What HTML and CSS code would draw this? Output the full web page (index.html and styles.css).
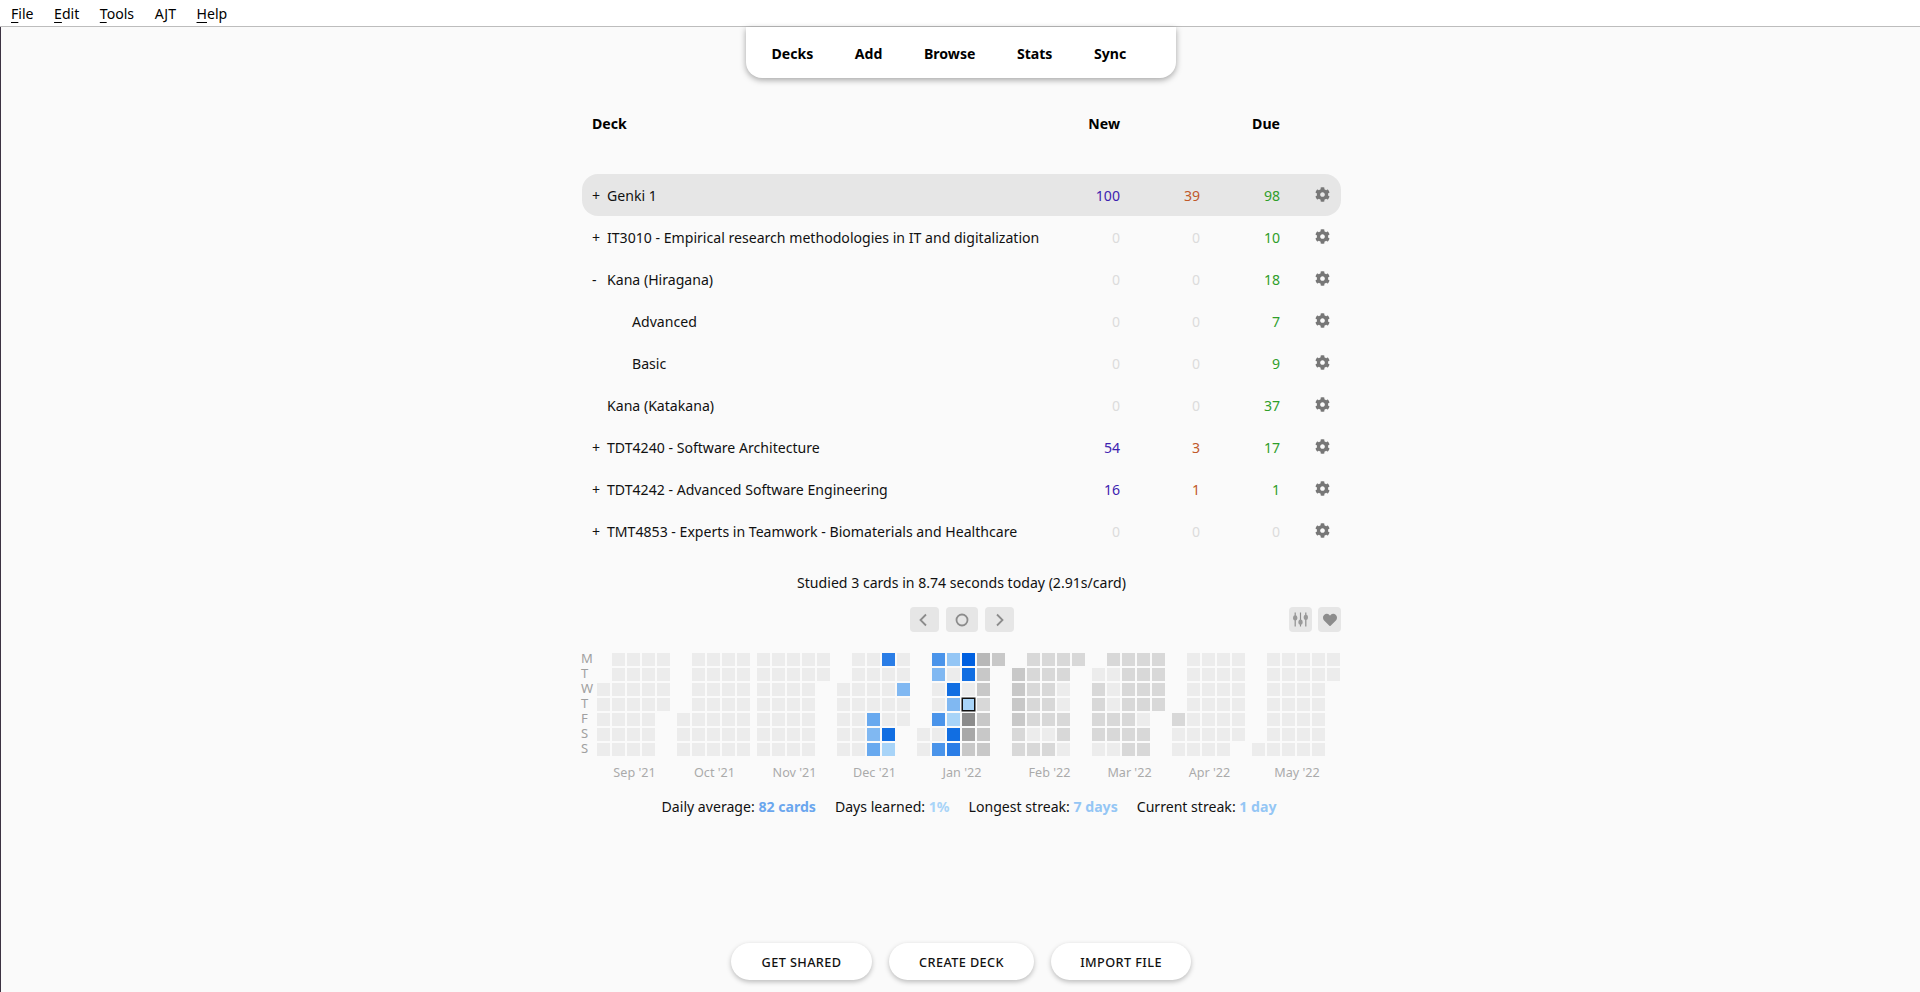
FILE: index.html
```html
<!DOCTYPE html>
<html lang="en">
<head>
  <meta charset="UTF-8" />
  <title>Anki</title>
  <link rel="stylesheet" href="styles.css">
</head>
<body>
  <svg class="sprites" aria-hidden="true">
    <symbol id="gear" viewBox="0 0 512 512">
      <path d="M487.4 315.7l-42.6-24.6c4.3-23.2 4.3-47 0-70.2l42.6-24.6c4.9-2.8 7.1-8.6 5.5-14-11.1-35.6-30-67.8-54.7-94.6-3.8-4.1-10-5.1-14.8-2.3L380.8 110c-17.9-15.4-38.5-27.3-60.8-35.1V25.8c0-5.6-3.9-10.5-9.4-11.7-36.7-8.2-74.3-7.8-109.2 0-5.5 1.2-9.4 6.1-9.4 11.7V75c-22.2 7.9-42.8 19.8-60.8 35.1L88.7 85.5c-4.9-2.8-11-1.9-14.8 2.3-24.7 26.7-43.6 58.9-54.7 94.6-1.7 5.4.6 11.2 5.5 14L67.3 221c-4.3 23.2-4.3 47 0 70.2l-42.6 24.6c-4.9 2.8-7.1 8.6-5.5 14 11.1 35.6 30 67.8 54.7 94.6 3.8 4.1 10 5.1 14.8 2.3l42.6-24.6c17.9 15.4 38.5 27.3 60.8 35.1v49.2c0 5.6 3.9 10.5 9.4 11.7 36.7 8.2 74.3 7.8 109.2 0 5.5-1.2 9.4-6.1 9.4-11.7v-49.2c22.2-7.9 42.8-19.8 60.8-35.1l42.6 24.6c4.9 2.8 11 1.9 14.8-2.3 24.7-26.7 43.6-58.9 54.7-94.6 1.5-5.5-.7-11.3-5.6-14.1zM256 336c-44.1 0-80-35.9-80-80s35.9-80 80-80 80 35.9 80 80-35.9 80-80 80z"/>
    </symbol>
  </svg>

  <div class="menubar">
    <span><u>F</u>ile</span>
    <span><u>E</u>dit</span>
    <span><u>T</u>ools</span>
    <span>AJT</span>
    <span><u>H</u>elp</span>
  </div>

  <div class="main">
    <nav class="toolbar">
      <a>Decks</a>
      <a>Add</a>
      <a>Browse</a>
      <a>Stats</a>
      <a>Sync</a>
    </nav>

    <div class="decks">
      <div class="deck-row deck-head">
        <span class="deck-title">Deck</span>
        <span class="num">New</span>
        <span></span>
        <span class="num">Due</span>
        <span></span>
      </div>

      <div class="deck-list">
        <div class="deck-row is-current">
          <span class="deck-name"><i class="toggle">+</i>Genki 1</span>
          <span class="num new">100</span><span class="num learn">39</span><span class="num due">98</span>
          <svg class="gear"><use href="#gear"/></svg>
        </div>
        <div class="deck-row">
          <span class="deck-name"><i class="toggle">+</i>IT3010 - Empirical research methodologies in IT and digitalization</span>
          <span class="num zero">0</span><span class="num zero">0</span><span class="num due">10</span>
          <svg class="gear"><use href="#gear"/></svg>
        </div>
        <div class="deck-row">
          <span class="deck-name"><i class="toggle">-</i>Kana (Hiragana)</span>
          <span class="num zero">0</span><span class="num zero">0</span><span class="num due">18</span>
          <svg class="gear"><use href="#gear"/></svg>
        </div>
        <div class="deck-row">
          <span class="deck-name sub">Advanced</span>
          <span class="num zero">0</span><span class="num zero">0</span><span class="num due">7</span>
          <svg class="gear"><use href="#gear"/></svg>
        </div>
        <div class="deck-row">
          <span class="deck-name sub">Basic</span>
          <span class="num zero">0</span><span class="num zero">0</span><span class="num due">9</span>
          <svg class="gear"><use href="#gear"/></svg>
        </div>
        <div class="deck-row">
          <span class="deck-name"><i class="toggle"></i>Kana (Katakana)</span>
          <span class="num zero">0</span><span class="num zero">0</span><span class="num due">37</span>
          <svg class="gear"><use href="#gear"/></svg>
        </div>
        <div class="deck-row">
          <span class="deck-name"><i class="toggle">+</i>TDT4240 - Software Architecture</span>
          <span class="num new">54</span><span class="num learn">3</span><span class="num due">17</span>
          <svg class="gear"><use href="#gear"/></svg>
        </div>
        <div class="deck-row">
          <span class="deck-name"><i class="toggle">+</i>TDT4242 - Advanced Software Engineering</span>
          <span class="num new">16</span><span class="num learn">1</span><span class="num due">1</span>
          <svg class="gear"><use href="#gear"/></svg>
        </div>
        <div class="deck-row">
          <span class="deck-name"><i class="toggle">+</i>TMT4853 - Experts in Teamwork - Biomaterials and Healthcare</span>
          <span class="num zero">0</span><span class="num zero">0</span><span class="num zero">0</span>
          <svg class="gear"><use href="#gear"/></svg>
        </div>
      </div>
    </div>

    <p class="studied">Studied 3 cards in 8.74 seconds today (2.91s/card)</p>

    <div class="heat-controls">
      <div></div>
      <div class="heat-nav">
        <button class="icon-btn nav-btn">
          <svg viewBox="0 0 16 16"><path d="M10 2.5 4.5 8l5.5 5.5"/></svg>
        </button>
        <button class="icon-btn nav-btn wide">
          <svg viewBox="0 0 16 16"><circle cx="8" cy="8" r="5.5"/></svg>
        </button>
        <button class="icon-btn nav-btn">
          <svg viewBox="0 0 16 16"><path d="M6 2.5 11.500 8 6 13.500"/></svg>
        </button>
      </div>
      <div class="heat-tools">
        <button class="icon-btn tool-btn">
          <svg viewBox="0 0 16 16">
            <path d="M3 1.500v13M8 1.500v13M13 1.500v13"/>
            <rect class="knob" x="1" y="4" width="4" height="5" rx="2"/>
            <rect class="knob" x="6" y="8" width="4" height="5" rx="2"/>
            <rect class="knob" x="11" y="3.500" width="4" height="5" rx="2"/>
          </svg>
        </button>
        <button class="icon-btn tool-btn">
          <svg class="heart" viewBox="0 0 512 512"><path d="M462.300 62.600C407.500 15.900 326 24.300 275.700 76.200L256 96.500l-19.700-20.300C186.100 24.300 104.500 15.900 49.700 62.600c-62.800 53.600-66.100 149.800-9.900 207.900l193.500 199.800c12.500 12.900 32.800 12.900 45.300 0l193.500-199.800c56.300-58.100 53-154.300-9.800-207.900z"/></svg>
        </button>
      </div>
    </div>

    <div class="heatmap" id="heatmap">
      <div class="weekdays">
        <span>M</span><span>T</span><span>W</span><span>T</span><span>F</span><span>S</span><span>S</span>
      </div>
    </div>

    <p class="summary">
      <span>Daily average: <b class="c-avg">82 cards</b></span>
      <span>Days learned: <b class="c-pct">1%</b></span>
      <span>Longest streak: <b class="c-streak">7 days</b></span>
      <span>Current streak: <b class="c-streak">1 day</b></span>
    </p>

    <div class="bottom-btns">
      <button class="pill pill-shared">Get Shared</button>
      <button class="pill pill-create">Create Deck</button>
      <button class="pill pill-import">Import File</button>
    </div>
  </div>

  <script src="heat.js"></script>
</body>
</html>
```

FILE: styles.css
```css
* {
  box-sizing: border-box;
}
body {
  margin: 0;
  height: 992px;
  display: flex;
  flex-direction: column;
  font-family: "Noto Sans", "Open Sans", sans-serif;
  font-size: 14.1px;
  color: #111;
  background-color: #fafafa;
  overflow: hidden;
}
.sprites {
  display: none;
}
.menubar {
  height: 27px;
  flex: none;
  display: flex;
  align-items: center;
  gap: 20.5px;
  padding-left: 11px;
  background: white;
  border-bottom: 1px solid #bdbdbd;
  color: #000;
}
.menubar u {
  text-underline-offset: 3px;
}
.main {
  flex: 1;
  display: flex;
  flex-direction: column;
  align-items: center;
  border-left: 1px solid #3c3242;
}
.toolbar {
  width: 430px;
  height: 51px;
  flex: none;
  display: flex;
  align-items: center;
  gap: 41.5px;
  padding: 2px 0 0 26px;
  background: white;
  border-radius: 0 0 16px 16px;
  box-shadow: 0 2px 6px rgba(0, 0, 0, 0.35);
  font-weight: 700;
  color: #000;
}
.decks {
  width: 759px;
  margin: 25px 0 0 2px;
}
.deck-row {
  height: 42px;
  display: grid;
  grid-template-columns: 1fr 80px 80px 80px 61px;
  align-items: center;
  padding-left: 10px;
  border-radius: 16px;
}
.deck-row.is-current {
  background-color: #e6e6e6;
}
.deck-head {
  padding-bottom: 2px;
  font-weight: 700;
  color: #000;
}
.deck-list {
  margin-top: 29px;
}
.num {
  text-align: right;
}
.new {
  color: #3d22b0;
}
.learn {
  color: #c0582a;
}
.due {
  color: #2f9e2a;
}
.zero {
  color: #dcdcdc;
}
.toggle {
  display: inline-block;
  width: 15px;
  font-style: normal;
}
.sub {
  padding-left: 40px;
}
.gear {
  width: 15px;
  height: 15px;
  justify-self: end;
  margin: -2px 11px 0 0;
  fill: #777;
}
.studied {
  margin: 21px 0 0 2px;
  line-height: 20px;
}
.heat-controls {
  width: 759px;
  margin: 14px 0 0 2px;
  display: grid;
  grid-template-columns: 1fr auto 1fr;
}
.heat-nav,
.heat-tools {
  display: flex;
  gap: 7px;
}
.heat-tools {
  justify-content: flex-end;
  gap: 6px;
}
.icon-btn {
  height: 25px;
  padding: 0;
  border: none;
  border-radius: 4px;
  background-color: #e6e6e6;
  display: flex;
  align-items: center;
  justify-content: center;
}
.nav-btn {
  width: 29px;
}
.nav-btn.wide {
  width: 32px;
}
.tool-btn {
  width: 23px;
}
.icon-btn svg {
  width: 16px;
  height: 16px;
  fill: none;
  stroke: #8c8c8c;
  stroke-width: 1.8;
}
.tool-btn svg {
  width: 17px;
  height: 17px;
  stroke-width: 1.1;
}
.knob {
  fill: #999;
  stroke: none;
}
.icon-btn svg.heart {
  width: 14px;
  height: 14px;
  fill: #8c8c8c;
  stroke: none;
}
.heatmap {
  width: 759px;
  margin: 21px 0 0 2px;
  display: flex;
  gap: 7px;
}
.weekdays {
  width: 8px;
  display: grid;
  grid-template-rows: repeat(7, 13px);
  row-gap: 2px;
  margin-top: -1px;
  align-self: flex-start;
  color: #a0a0a0;
  font-size: 13px;
  line-height: 13px;
}
.weekdays span {
  margin-left: -1px;
}
.month {
  display: flex;
  flex-direction: column;
  align-items: center;
}
.month-grid {
  display: grid;
  grid-auto-flow: column;
  grid-template-rows: repeat(7, 13px);
  grid-auto-columns: 13px;
  gap: 2px;
}
.month-label {
  margin-top: 9px;
  padding-left: 2px;
  line-height: 16px;
  font-size: 12.6px;
  color: #aaa;
  white-space: nowrap;
}
.cell-a { background-color: #ececec; }
.cell-b { background-color: #d8d8d8; }
.cell-c { background-color: #c8c8c8; }
.cell-d { background-color: #b8b8b8; }
.cell-e { background-color: #a8a8a8; }
.cell-f { background-color: #8c8c8c; }
.cell-1 { background-color: #a8d4f8; }
.cell-2 { background-color: #94c6f5; }
.cell-3 { background-color: #80b8f2; }
.cell-4 { background-color: #68a9ef; }
.cell-5 { background-color: #4a94ea; }
.cell-6 { background-color: #2a7de6; }
.cell-7 { background-color: #116ee2; }
.cell-8 { background-color: #0060e0; }
.cell-T {
  background-color: #a8d4f8;
  border: 1px solid #111;
  box-shadow: 0 0 0 0.5px #111;
}
.summary {
  margin: 16px 0 0 17px;
  display: flex;
  gap: 19px;
  line-height: 20px;
}
.c-avg { color: #6aa6ee; }
.c-pct { color: #a8d4f8; }
.c-streak { color: #94c6f5; }
.bottom-btns {
  margin: auto 0 0 1px;
  padding-bottom: 12px;
  display: flex;
  gap: 17px;
}
.pill {
  height: 37px;
  padding: 1px 0 0;
  border: none;
  border-radius: 19px;
  background: white;
  box-shadow: 0 2px 5px rgba(0, 0, 0, 0.25);
  font-family: inherit;
  font-size: 12.7px;
  font-weight: 500;
  letter-spacing: 0.4px;
  text-transform: uppercase;
  color: #111;
}
.pill-shared { width: 141px; }
.pill-create { width: 145px; }
.pill-import { width: 140px; }
```

FILE: heat.js
```js
// one char per day, see the .cell-* classes
const rest = (n) => 'a'.repeat(n);

const meses = [
  { label: "Sep '21", start: 2, days: rest(30) },
  { label: "Oct '21", start: 4, days: rest(31) },
  { label: "Nov '21", start: 0, days: rest(30) },
  { label: "Dec '21", start: 2, days: 'aaaaa' + 'aaaaaaa' + 'aaaa434' + '6aaaa71' + 'aa3aa' },
  { label: "Jan '22", start: 5, days: 'aa' + '53aa5a5' + '2a73176' + '87aTfec' + 'dccbccc' + 'c' },
  { label: "Feb '22", start: 1, days: 'ccccbb' + 'bbbbbab' + 'bbbbbab' + 'bbaabba' + 'b' },
  { label: "Mar '22", start: 1, days: 'abbbba' + 'baaabba' + 'bbbbbbb' + 'bbbbabb' + 'bbbb' },
  { label: "Apr '22", start: 4, days: 'baa' + rest(27) },
  { label: "May '22", start: 6, days: rest(31) }
];

const heatmap = document.getElementById('heatmap');

meses.forEach(m => {
  const month = document.createElement('div');
  month.className = 'month';

  const grid = document.createElement('div');
  grid.className = 'month-grid';
  [...m.days].forEach((d, i) => {
    const cell = document.createElement('div');
    cell.className = 'cell-' + d;
    if (i === 0) cell.style.gridRowStart = m.start + 1;
    grid.appendChild(cell);
  });

  const label = document.createElement('div');
  label.className = 'month-label';
  label.textContent = m.label;

  month.appendChild(grid);
  month.appendChild(label);
  heatmap.appendChild(month);
});
```
